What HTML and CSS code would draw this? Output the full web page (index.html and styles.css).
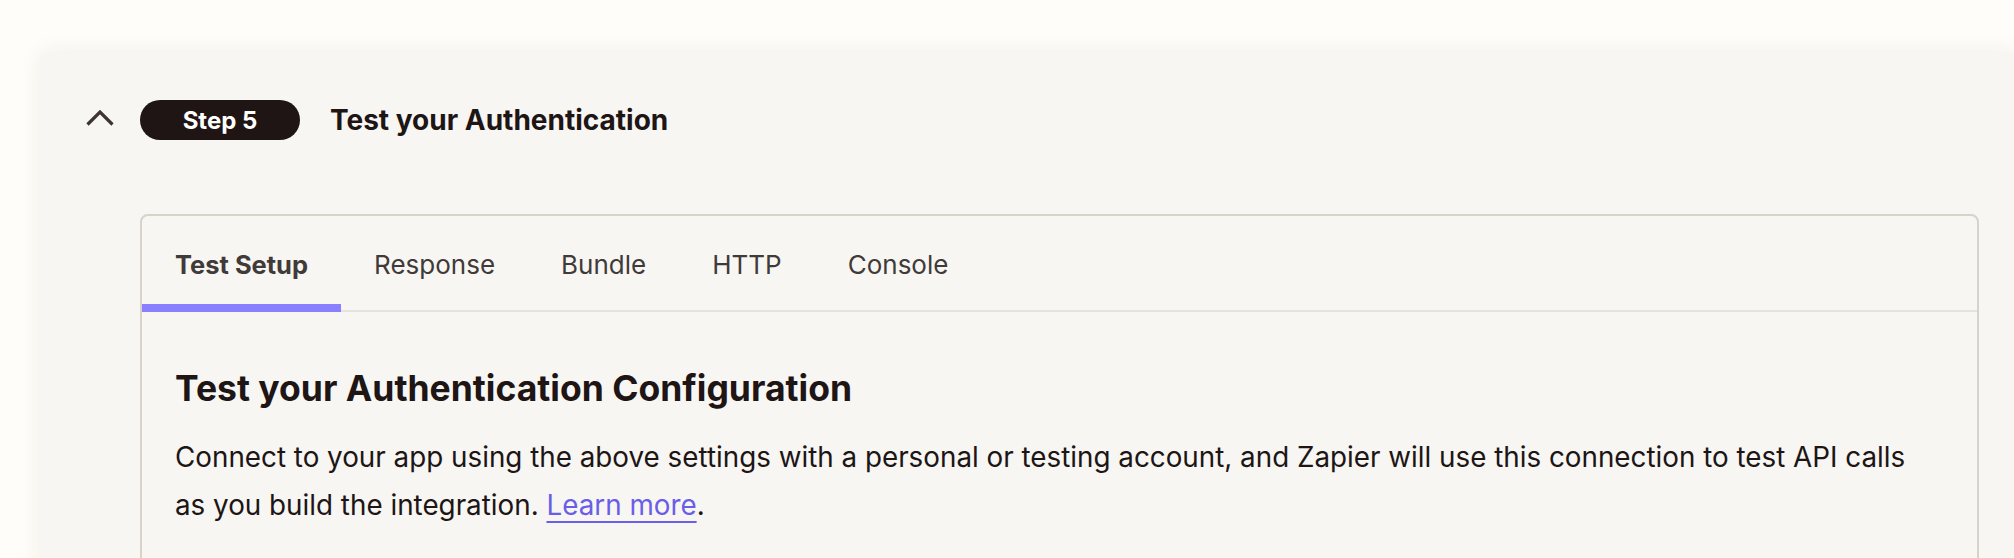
FILE: index.html
```html
<!DOCTYPE html>
<html lang="en">
<head>
<meta charset="utf-8">
<title>Test your Authentication</title>
<link rel="stylesheet" href="styles.css">
</head>
<body>
<div class="page">
  <section class="card">
    <header class="step-header">
      <button class="chevron" aria-label="Collapse">
        <svg viewBox="0 0 28 16" width="28" height="16"><path d="M1.5 14.5 L14 2 L26.5 14.5" fill="none" stroke="#3d3535" stroke-width="3.2"/></svg>
      </button>
      <span class="step-pill">Step 5</span>
      <h2 class="step-title">Test your Authentication</h2>
    </header>
    <div class="panel">
      <nav class="tabs">
        <a class="tab active">Test Setup</a>
        <a class="tab">Response</a>
        <a class="tab">Bundle</a>
        <a class="tab">HTTP</a>
        <a class="tab">Console</a>
      </nav>
      <div class="panel-body">
        <h3 class="panel-title">Test your Authentication Configuration</h3>
        <p class="panel-text">Connect to your app using the above settings with a personal or testing account, and Zapier will use this connection to test API calls as you build the integration. <a class="link" href="#">Learn more</a>.</p>
      </div>
    </div>
  </section>
</div>
</body>
</html>
```
FILE: styles.css
```css
* { box-sizing: border-box; }
html, body { margin: 0; padding: 0; }
body {
  background: #fffdf9;
  font-family: Inter, "Noto Sans", sans-serif;
  color: #201515;
  overflow: hidden;
  width: 2014px;
  height: 558px;
}
.page {
  padding: 52px 0 0 40px;
}
.card {
  background: #f7f6f3;
  border-radius: 10px 0 0 0;
  box-shadow: 0 0 22px rgba(60, 40, 20, 0.07);
  padding: 48px 35px 40px 46px;
  min-height: 600px;
}
.step-header {
  display: flex;
  align-items: center;
  height: 40px;
}
.chevron {
  width: 28px;
  height: 16px;
  padding: 0;
  border: 0;
  background: none;
  display: flex;
  margin-right: 26px;
  margin-top: -4px;
}
.step-pill {
  display: inline-flex;
  align-items: center;
  justify-content: center;
  width: 160px;
  height: 40px;
  border-radius: 20px;
  background: #201515;
  color: #ffffff;
  font-weight: 700;
  font-size: 24px;
}
.step-title {
  margin: 0 0 0 30px;
  font-size: 28px;
  font-weight: 700;
  color: #201515;
}
.panel {
  margin-top: 74px;
  margin-left: 54px;
  border: 2px solid #d8d2c9;
  border-radius: 8px;
}
.tabs {
  display: flex;
  border-bottom: 2px solid #e7e3dc;
  height: 96px;
}
.tab {
  display: flex;
  align-items: center;
  padding: 8px 33px 0 33px;
  height: 96px;
  margin-bottom: -2px;
  font-size: 26px;
  color: #413a38;
  border-bottom: 8px solid transparent;
}
.tab.active {
  font-weight: 700;
  font-size: 25.5px;
  border-bottom-color: #8a7fff;
}
.panel-body {
  padding: 53px 48px 40px 33px;
}
.panel-title {
  margin: 0;
  font-size: 35.5px;
  line-height: 48px;
  font-weight: 700;
  color: #201515;
}
.panel-text {
  margin: 20px 0 0 0;
  font-size: 27.8px;
  line-height: 48px;
  color: #201515;
}
.link {
  color: #6a5ee8;
  text-decoration: underline;
  text-decoration-thickness: 2px;
  text-underline-offset: 6px;
}
```
